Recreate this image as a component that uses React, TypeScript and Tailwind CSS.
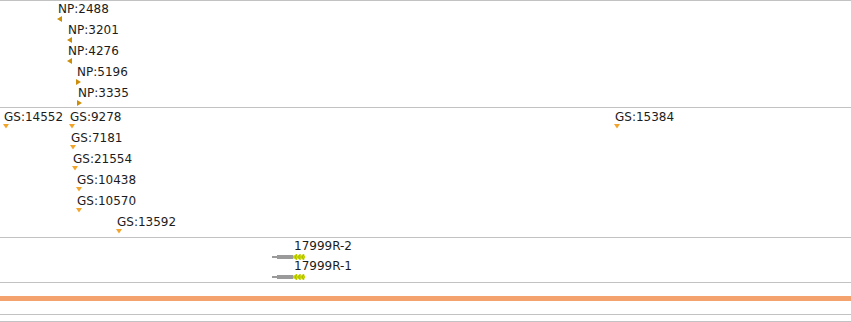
import React from 'react';

type Dir = 'left' | 'right' | 'down';

interface Feat {
  label: string;
  x: number;
  row: number;
  dir: Dir;
}

const npFeats: Feat[] = [
  { label: 'NP:2488', x: 57, row: 0, dir: 'left' },
  { label: 'NP:3201', x: 67, row: 1, dir: 'left' },
  { label: 'NP:4276', x: 67, row: 2, dir: 'left' },
  { label: 'NP:5196', x: 76, row: 3, dir: 'right' },
  { label: 'NP:3335', x: 77, row: 4, dir: 'right' },
];

const gsFeats: Feat[] = [
  { label: 'GS:14552', x: 3, row: 0, dir: 'down' },
  { label: 'GS:9278', x: 69, row: 0, dir: 'down' },
  { label: 'GS:15384', x: 614, row: 0, dir: 'down' },
  { label: 'GS:7181', x: 70, row: 1, dir: 'down' },
  { label: 'GS:21554', x: 72, row: 2, dir: 'down' },
  { label: 'GS:10438', x: 76, row: 3, dir: 'down' },
  { label: 'GS:10570', x: 76, row: 4, dir: 'down' },
  { label: 'GS:13592', x: 116, row: 5, dir: 'down' },
];

function Marker({ dir }: { dir: Dir }) {
  if (dir === 'down') {
    return (
      <svg width="6" height="5" viewBox="0 0 6 5" className="block">
        <polygon points="0,0 6,0 3,4.5" fill="#f2a52a" />
      </svg>
    );
  }
  return (
    <svg width="5" height="6" viewBox="0 0 5 6" className="block">
      {dir === 'left'
        ? <polygon points="5,0 5,6 0,3" fill="#cc8e0a" />
        : <polygon points="0,0 0,6 5,3" fill="#cc8e0a" />}
    </svg>
  );
}

// label on top, strand marker just under it
function Feature({ f, top }: { f: Feat; top: number }) {
  return (
    <div className="absolute" style={{ left: f.x, top }}>
      <div className="text-[12px] leading-[14px] text-[#1c1c1c] whitespace-nowrap pl-px">{f.label}</div>
      <Marker dir={f.dir} />
    </div>
  );
}

function Gene({ label, top }: { label: string; top: number }) {
  return (
    <div className="absolute left-[271px]" style={{ top }}>
      <div className="ml-[23px] text-[12px] leading-[14px] text-[#1c1c1c] whitespace-nowrap">{label}</div>
      <svg width="36" height="6" viewBox="0 0 36 6" className="block mt-px">
        <rect x="1" y="2" width="7" height="2" fill="#9a9a9a" />
        <rect x="6" y="1" width="16" height="4" fill="#9a9a9a" />
        <rect x="22" y="1.5" width="12" height="3" fill="#c8d600" />
        <polygon points="22,3 25,0 26,0 26,6 25,6" fill="#c8d600" />
        <polygon points="25.5,3 28.5,0 29.5,0 29.5,6 28.5,6" fill="#c8d600" />
        <polygon points="29,3 32,0 33,0 33,6 32,6" fill="#c8d600" />
        <path d="M26 0.5 L24 3 L26 5.5 M29.5 0.5 L27.5 3 L29.5 5.5 M33 0.5 L31 3 L33 5.5" stroke="#a2ae00" strokeWidth="0.8" fill="none" />
      </svg>
    </div>
  );
}

export default function App() {
  return (
    <div className="w-[851px] h-[322px] bg-white overflow-hidden flex flex-col font-['DejaVu_Sans',sans-serif]">
      {/* NP track */}
      <div className="relative h-[107px] border-t border-[#c2c2c2] shrink-0">
        {npFeats.map(f => <Feature key={f.label} f={f} top={1 + f.row * 21} />)}
      </div>

      {/* GS track */}
      <div className="relative h-[130px] border-t border-[#c2c2c2] shrink-0">
        {gsFeats.map(f => <Feature key={f.label} f={f} top={2 + f.row * 21} />)}
      </div>

      {/* gene track */}
      <div className="relative h-[45px] border-t border-[#c2c2c2] shrink-0">
        <Gene label="17999R-2" top={1} />
        <Gene label="17999R-1" top={21} />
      </div>

      {/* sequence / ruler */}
      <div className="h-[32px] border-t border-[#c2c2c2] shrink-0 pt-[13px]">
        <div className="h-[5px] bg-[#f4a36e]" />
      </div>
      <div className="h-[7px] border-t border-[#c2c2c2] shrink-0" />
      <div className="h-px border-t border-[#c2c2c2] shrink-0" />
    </div>
  );
}
